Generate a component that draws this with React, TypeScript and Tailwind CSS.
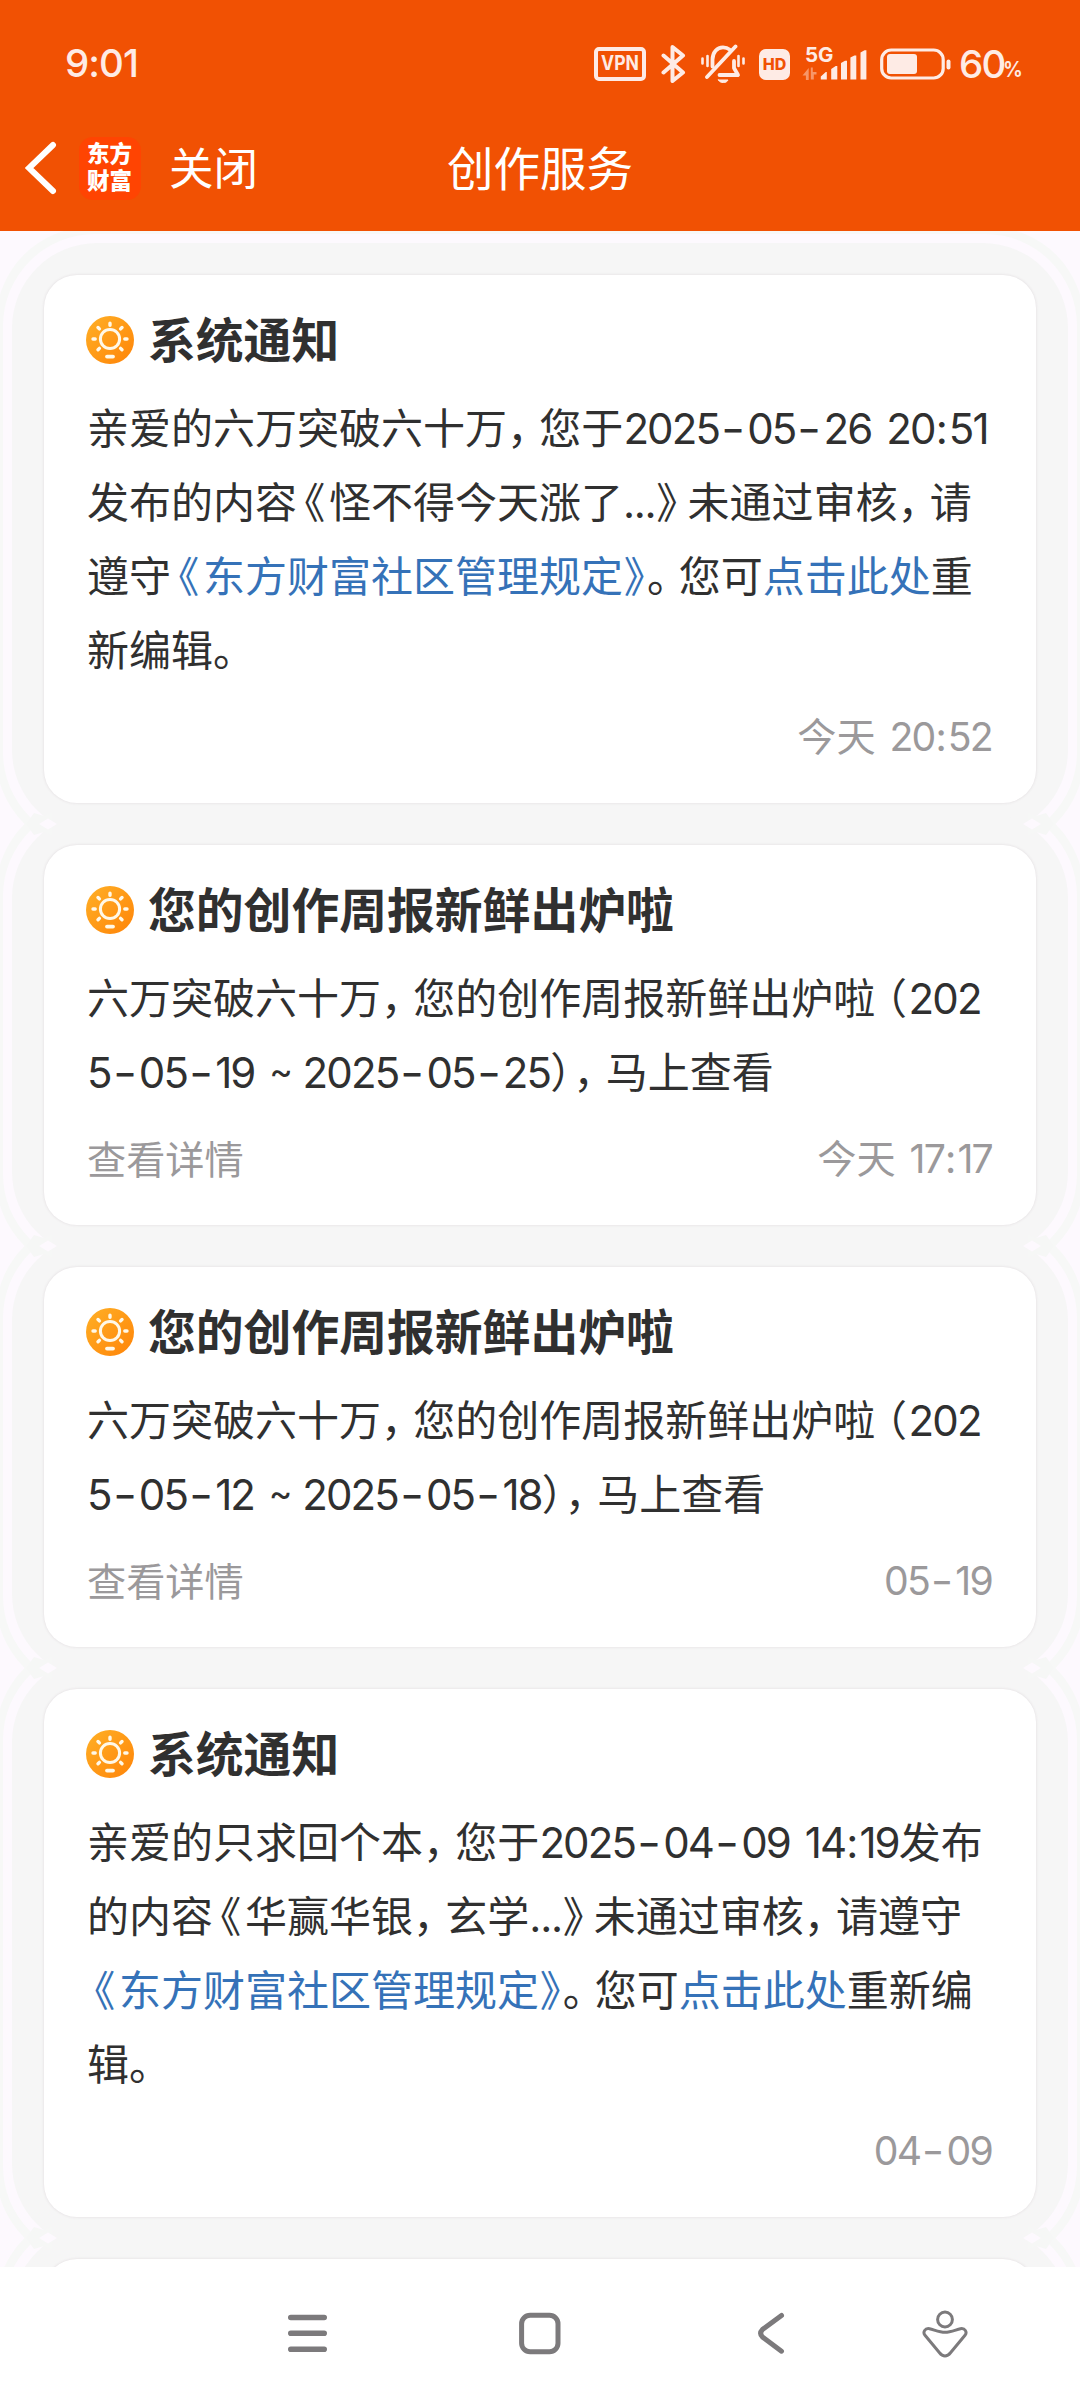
import { Fragment, type ReactNode } from 'react';
import clsx from 'clsx';

type Segment = { text: string; link?: boolean };

type Notice = {
  id: string;
  title: string;
  lines: Segment[][];
  action?: string;
  time: string;
};

const NOTICES: Notice[] = [
  {
    id: 'n1',
    title: '系统通知',
    lines: [
      [{ text: '亲爱的六万突破六十万，您于2025-05-26 20:51' }],
      [{ text: '发布的内容《怪不得今天涨了...》未通过审核，请' }],
      [
        { text: '遵守' },
        { text: '《东方财富社区管理规定》', link: true },
        { text: '。您可' },
        { text: '点击此处', link: true },
        { text: '重' },
      ],
      [{ text: '新编辑。' }],
    ],
    time: '今天 20:52',
  },
  {
    id: 'n2',
    title: '您的创作周报新鲜出炉啦',
    lines: [
      [{ text: '六万突破六十万，您的创作周报新鲜出炉啦（202' }],
      [{ text: '5-05-19 ~ 2025-05-25），马上查看' }],
    ],
    action: '查看详情',
    time: '今天 17:17',
  },
  {
    id: 'n3',
    title: '您的创作周报新鲜出炉啦',
    lines: [
      [{ text: '六万突破六十万，您的创作周报新鲜出炉啦（202' }],
      [{ text: '5-05-12 ~ 2025-05-18），马上查看' }],
    ],
    action: '查看详情',
    time: '05-19',
  },
  {
    id: 'n4',
    title: '系统通知',
    lines: [
      [{ text: '亲爱的只求回个本，您于2025-04-09 14:19发布' }],
      [{ text: '的内容《华赢华银，玄学...》未通过审核，请遵守' }],
      [
        { text: '《东方财富社区管理规定》', link: true },
        { text: '。您可' },
        { text: '点击此处', link: true },
        { text: '重新编' },
      ],
      [{ text: '辑。' }],
    ],
    time: '04-09',
  },
];

// Full-width punctuation is set on half an em plus its own side bearing
const PUNCT: Record<string, string> = {
  '，': 'pr-[0.27em]',
  '。': 'pr-[0.26em]',
  '》': 'pl-[0.02em] pr-[0.24em]',
  '）': 'pr-[0.05em]',
  '《': 'pl-[0.17em] pr-[0.09em]',
  '（': 'pl-[0.25em] pr-[0.04em]',
};

function Typeset({ text, tightEnd }: { text: string; tightEnd?: boolean }) {
  const tokens = text.match(/[，。》）《（]|[-:~]|[0-9]+|[ .]+|[^，。》）《（\-0-9: ~.]+/g) ?? [];
  return (
    <>
      {tokens.map((t, i) => {
        if (PUNCT[t]) {
          const tight = tightEnd && i === tokens.length - 1;
          return (
            <span
              key={i}
              className={clsx(
                "inline-block leading-none [font-feature-settings:'halt']",
                tight ? 'pl-[0.02em] pr-[0.05em]' : PUNCT[t],
              )}
            >
              {t}
            </span>
          );
        }
        if (t === '-') {
          return (
            <span key={i} className="inline-block w-[0.67em] scale-x-125 text-center font-['Inter'] leading-none">
              -
            </span>
          );
        }
        if (t === ':') {
          return (
            <span key={i} className="inline-block w-[0.34em] text-center font-['Inter'] leading-none">
              :
            </span>
          );
        }
        if (t === '~') {
          return (
            <span key={i} className="inline-block w-[0.52em] -translate-y-1 text-center font-['Inter'] text-[0.85em] leading-none">
              ~
            </span>
          );
        }
        if (/^[ .]+$/.test(t)) {
          return (
            <span key={i} className="font-['Inter'] tracking-[-0.03em] [word-spacing:0.1em]">
              {t}
            </span>
          );
        }
        if (/^[0-9]+$/.test(t)) {
          return (
            <span key={i} className="font-['Inter'] tracking-[-0.045em] [font-kerning:none]">
              {t}
            </span>
          );
        }
        return <Fragment key={i}>{t}</Fragment>;
      })}
    </>
  );
}

function SunIcon() {
  return (
    <svg width="48" height="48" viewBox="0 0 48 48" fill="none">
      <defs>
        <linearGradient id="sun" x1="0" y1="0" x2="1" y2="1">
          <stop offset="0" stopColor="#ffb026" />
          <stop offset="1" stopColor="#ff8408" />
        </linearGradient>
      </defs>
      <circle cx="24" cy="24" r="24" fill="url(#sun)" />
      <circle cx="24" cy="23" r="9.6" stroke="#fff8e8" strokeWidth="3" />
      <g stroke="#fff8e8" strokeWidth="3.4" strokeLinecap="round">
        <path d="M24 7.2v2M7 23h2.2M38.8 23H41M12 11.5l1.4 1.4M36 11.5l-1.4 1.4M12 33.8l1.4-1.4M36 33.8l-1.4-1.4" />
        <path d="M21 40.6h6" strokeWidth="3.8" />
      </g>
    </svg>
  );
}

// Layered halo behind every card
function Halo() {
  return (
    <>
      <div className="absolute -inset-x-12 -inset-y-12 -z-30 rounded-[95px] bg-[#f7f8f7]" />
      <div className="absolute -inset-x-[41px] -inset-y-[41px] -z-20 rounded-[92px] bg-[#fdf9fe]" />
      <div className="absolute -inset-8 -z-10 rounded-[85px] bg-[#f6f6f6]" />
    </>
  );
}

// Where the halos of two neighbouring cards cross
function HaloKnot({ className }: { className: string }) {
  return (
    <svg className={clsx('absolute -bottom-8', className)} width="34" height="22" viewBox="0 0 34 22">
      <path d="M0 11 8 0 18 3 26 0V22L18 19 8 22Z" fill="#f6f7f6" />
      <path d="M13 11 22 5.5 31 11 22 16.5Z" fill="#fdf9fe" />
    </svg>
  );
}

function Card({ children, className }: { children?: ReactNode; className?: string }) {
  return (
    <div className={clsx('relative', className)}>
      <Halo />
      <HaloKnot className="-left-[18px]" />
      <HaloKnot className="-right-[18px] -scale-x-100" />
      <div className="h-full rounded-[33px] bg-white px-11 pt-[41px] pb-[38px] shadow-[0_0_3px_rgba(90,60,80,0.14)]">
        {children}
      </div>
    </div>
  );
}

function NoticeCard({ notice }: { notice: Notice }) {
  return (
    <Card>
      <div className="-ml-0.5 flex h-12 items-center gap-[14px]">
        <SunIcon />
        <h2 className="mb-1 text-[47.8px] leading-[48px] font-bold whitespace-nowrap text-[#303030]">{notice.title}</h2>
      </div>
      <div className="-ml-px mt-[25px] mb-[22px] text-[42px] leading-[74px] text-[#303030]">
        {notice.lines.map((line, i) => (
          <p key={i} className="h-[74px] whitespace-pre">
            {line.map((seg, j) => (
              <span key={j} className={clsx(seg.link && 'text-[#3572b8]')}>
                <Typeset text={seg.text} tightEnd={line[j + 1]?.text.startsWith('。')} />
              </span>
            ))}
          </p>
        ))}
      </div>
      <div className="-ml-px flex h-[58px] items-center justify-between pb-px text-[39.2px] whitespace-pre text-[#9b999b]">
        <span>{notice.action}</span>
        <span>
          <Typeset text={notice.time} />
        </span>
      </div>
    </Card>
  );
}

function StatusBar() {
  return (
    <div className="flex h-[128px] items-center pl-[65px] font-['Inter'] text-[#feebe5]">
      <span className="text-[38.5px] font-medium tracking-[-0.9px]">9:01</span>
      <div className="ml-auto flex items-center pr-[58px]">
        <div className="flex h-[34px] w-[52px] items-center justify-center rounded-[5px] border-4 border-current text-[19.5px] font-bold">
          <span className="scale-x-90">VPN</span>
        </div>
        <svg className="ml-[15px]" width="25" height="40" viewBox="0 0 25 40" fill="none" stroke="currentColor" strokeWidth="4" strokeLinejoin="round" strokeLinecap="round">
          <path d="M2.5 11.5 22 28.5 11.5 37V3L22 11.5 2.5 28.5" />
        </svg>
        <svg className="ml-[15px]" width="44" height="40" viewBox="0 0 44 40" fill="none" stroke="currentColor" strokeWidth="3.8" strokeLinecap="round" strokeLinejoin="round">
          <path d="M11.5 22.5V15.5C11.7 8 16 3.4 22 3.4c3 0 5 .8 6.7 2.2M33 17v7l4 7H18.5" />
          <path d="M6 33 34.5 2.5" />
          <path d="M1.5 14.5v5M6.5 12v10M37.5 12v10M42.5 14.5v5" strokeWidth="2.6" />
          <path d="M17.5 36h9.5c-1 2-2.5 2.5-4.7 2.5s-3.8-.5-4.8-2.5z" fill="currentColor" strokeWidth="1" />
        </svg>
        <div className="ml-[14px] flex size-[31px] items-center justify-center rounded-[7px] bg-current">
          <span className="text-[16px] font-extrabold text-[#f15103]">HD</span>
        </div>
        <div className="relative ml-3 h-[34px] w-[65px]">
          <span className="absolute -top-0.5 left-[3px] text-[20.5px] leading-5 font-bold">5G</span>
          <svg className="size-full" viewBox="0 0 65 34" fill="currentColor">
            <path d="M6.7 21v12H3.9v-4.5H0.5zM8.8 32.5V20.5h2V25h3.7v2.5h-2.700v5z" opacity="0.45" />
            <path d="M18.8 32.5v-3l5-4.5h1v7.5zM29.2 32.5V22l4.500-3h1.600v13.500zM39 32.5V16l4-2.200h2v18.700zM48.4 32.5v-22l4-2h1.900v24zM58.5 32.5V5.5l4-2.200h1.900v29.200z" />
          </svg>
        </div>
        <svg className="ml-[13px]" width="71" height="32" viewBox="0 0 71 32" fill="none">
          <rect x="1.7" y="2" width="61.5" height="28" rx="9.5" stroke="currentColor" strokeWidth="3.2" />
          <rect x="7" y="6" width="30" height="20" rx="3" fill="currentColor" />
          <rect x="66.5" y="11.5" width="4" height="10" rx="2" fill="currentColor" />
        </svg>
        <span className="ml-2 w-[44px] text-[38.5px] leading-10 font-medium tracking-[-1.8px]">60</span>
        <span className="inline-block w-[19px] origin-left scale-x-90 pt-[9px] text-[22px] leading-10 font-semibold">%</span>
      </div>
    </div>
  );
}

function Header() {
  return (
    <header className="relative z-10 h-[230.5px] bg-[#f15103]">
      <StatusBar />
      <div className="grid h-[80px] grid-cols-[1fr_auto_1fr] items-center text-white">
        <div className="flex items-center">
          <svg className="ml-[25px]" width="32" height="54" viewBox="0 0 32 54" fill="none" stroke="currentColor" strokeWidth="6" strokeLinecap="round">
            <path d="M28 4 4 27l24 23" strokeLinejoin="miter" />
          </svg>
          <div className="ml-[22px] flex h-[63px] w-[62px] items-center justify-center rounded-[14px] bg-[#ff4402] pb-1">
            <p className="w-[46px] text-[22.5px] leading-[27px] font-black break-all">东方财富</p>
          </div>
          <span className="mb-1 ml-7 text-[44.5px] leading-none">关闭</span>
        </div>
        <h1 className="mb-1 text-[46.5px] leading-none">创作服务</h1>
      </div>
    </header>
  );
}

function NavBar() {
  return (
    <nav className="relative z-10 h-[133px] bg-white text-[#7c7a7c]">
      <div className="flex h-[132px] items-center pl-[286px]">
        <svg width="43" height="48" viewBox="0 0 43 48" stroke="currentColor" strokeWidth="5.6" strokeLinecap="round">
          <path d="M4.8 8.5h33.4M4.8 24.2h33.4M4.8 40.2h33.4" />
        </svg>
        <svg className="ml-[188px]" width="46" height="48" viewBox="0 0 46 48" fill="none" stroke="currentColor" strokeWidth="5">
          <rect x="4.6" y="6.2" width="36.4" height="36.6" rx="8.5" />
        </svg>
        <svg className="ml-[194px]" width="30" height="48" viewBox="0 0 30 48" fill="none" stroke="currentColor" strokeWidth="5" strokeLinecap="round">
          <path d="M24.5 6.5 5.5 20.5Q1.8 24.3 5.5 28.1L24.5 42.2" />
        </svg>
        <svg className="ml-[135px]" width="46" height="50" viewBox="0 0 46 50" fill="none" stroke="currentColor" strokeWidth="3" strokeLinejoin="round">
          <circle cx="23" cy="11.5" r="7.4" />
          <path d="M7.5 20.7c5 1.2 10 3.6 15.5 3.6s10.5-2.4 15.5-3.6c4.5-.8 7 3.5 4.5 6.6L28.5 44.8c-3.4 4.3-7.6 4.3-11 0L3 27.3c-2.5-3.1 0-7.4 4.5-6.6z" />
        </svg>
      </div>
    </nav>
  );
}

export default function App() {
  return (
    <div className="flex h-[2400px] w-[1080px] flex-col overflow-hidden bg-[#fdf9fe] font-['Noto_Sans_CJK_SC',sans-serif]">
      <Header />
      <main className="isolate flex flex-1 flex-col gap-[42px] overflow-hidden px-11 pt-[44.5px]">
        {NOTICES.map((n) => (
          <NoticeCard key={n.id} notice={n} />
        ))}
        <Card className="h-[380px] shrink-0" />
      </main>
      <NavBar />
    </div>
  );
}
